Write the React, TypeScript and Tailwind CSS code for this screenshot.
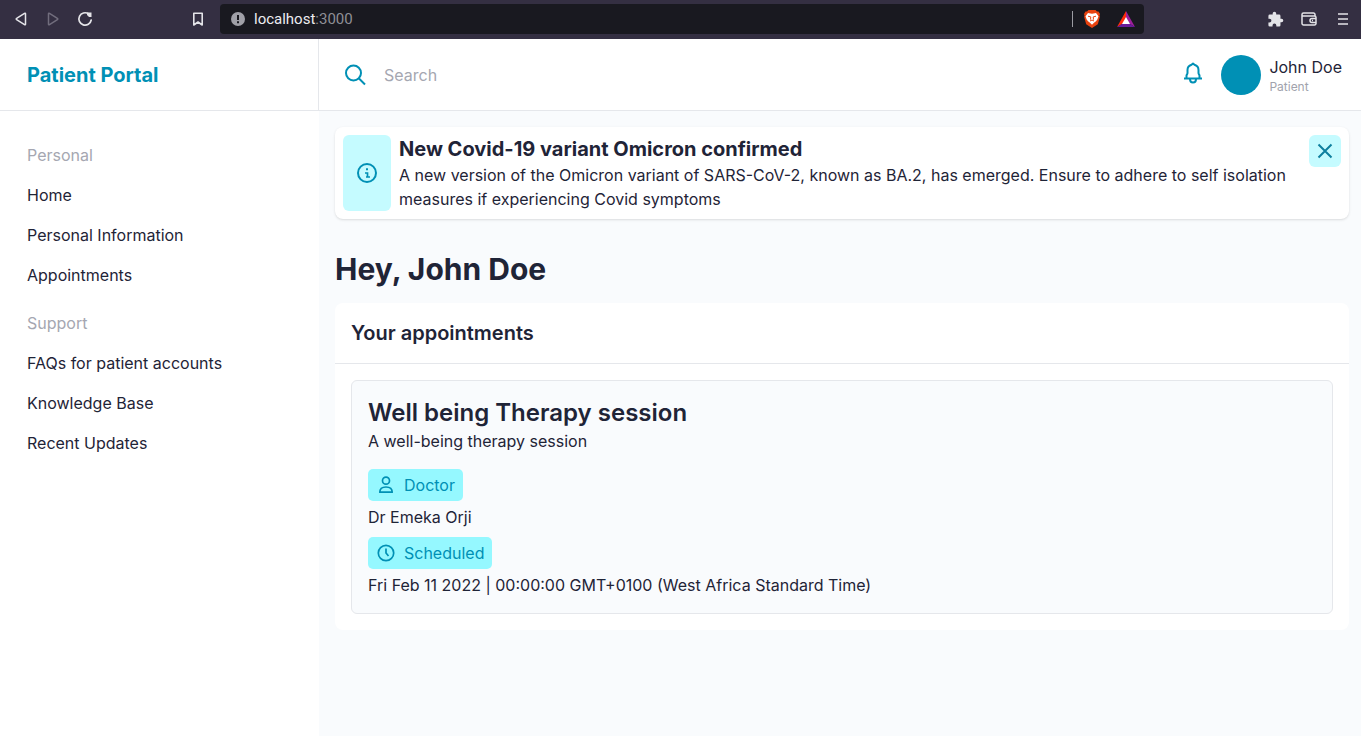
import type { ReactNode } from 'react';

const personalLinks = ['Home', 'Personal Information', 'Appointments'];
const supportLinks = ['FAQs for patient accounts', 'Knowledge Base', 'Recent Updates'];

const SearchIcon = () => (
  <svg viewBox="0 0 24 24" className="size-6" fill="none" stroke="currentColor" strokeWidth="2" aria-hidden="true">
    <circle cx="9.500" cy="10" r="7.500" />
    <path d="M15 15.500l6 6" />
  </svg>
);

const BellIcon = () => (
  <svg viewBox="0 0 24 24" className="size-6" fill="none" stroke="currentColor" strokeWidth="2" aria-hidden="true">
    <path d="M3 17.500h18" />
    <path d="M5.500 17v-2.500c0-.8 1-1.200 1-2.500V9c0-3 1.800-4.500 4-5.200L12 2.500l1.500 1.300c2.200.7 4 2.200 4 5.200v3c0 1.300 1 1.700 1 2.500V17" strokeLinejoin="round" />
    <path d="M9 18c0 2.300 1.200 3.500 3 3.500s3-1.200 3-3.500" />
  </svg>
);

const CloseIcon = () => (
  <svg viewBox="0 0 24 24" className="size-6" fill="none" stroke="currentColor" strokeWidth="2" aria-hidden="true">
    <path d="M5.500 5.500l13 13M18.500 5.500l-13 13" />
  </svg>
);

const InfoIcon = () => (
  <svg viewBox="0 0 24 24" className="size-6" fill="none" stroke="currentColor" strokeWidth="2" aria-hidden="true">
    <circle cx="12" cy="12" r="9" />
    <path d="M10 12h2.500v4.500M11 16h4" strokeWidth="1.700" />
    <path d="M11 8.200h2" />
  </svg>
);

const DoctorIcon = () => (
  <svg viewBox="0 0 20 20" className="size-5" fill="none" stroke="currentColor" strokeWidth="1.700" aria-hidden="true">
    <circle cx="10" cy="5.700" r="3.500" />
    <path d="M3.800 17.200c0-3.400 2.700-5.200 6.200-5.200s6.200 1.800 6.200 5.200z" strokeLinejoin="round" />
  </svg>
);

const ClockIcon = () => (
  <svg viewBox="0 0 20 20" className="size-5" fill="none" stroke="currentColor" strokeWidth="1.700" aria-hidden="true">
    <circle cx="10" cy="10" r="7.700" />
    <path d="M10 5.500V10l2.500 3" />
  </svg>
);

const BraveIcon = () => (
  <svg viewBox="0 0 16 18" className="h-[18px] w-4" aria-hidden="true">
    <path d="M4.500 0h7L13 1.600l1.500-.2L16 4l-.5 1.500.4 1.300-2.100 7.400L8 18l-5.800-3.800L.1 6.800l.4-1.300L0 4l1.500-2.600 1.500.2z" fill="#e8420f" />
    <path d="M4 3l4 .8L12 3l2.500 3.200-1.200 3.300L12 11.300l-2 1.500L8 14.700l-2-1.900-2-1.500-1.300-1.800L1.500 6.200z" fill="#fff" />
    <path d="M4 6.200l2.800.7-.3 2.700M12 6.200l-2.800.7.3 2.700M6 11l2-1 2 1" fill="none" stroke="#e8420f" />
  </svg>
);

const BatIcon = () => (
  <svg viewBox="0 0 18 16" className="h-4 w-[18px]" aria-hidden="true">
    <path d="M9 0L0 16l9-5.500z" fill="#ff2b0a" />
    <path d="M9 0l9 16-9-5.500z" fill="#9e1f9b" />
    <path d="M0 16h18l-9-5.500z" fill="#6a1b9a" />
    <path d="M9 6l4 7H5z" fill="#fff" />
  </svg>
);

interface BrowserButtonProps {
  label: string;
  children: ReactNode;
}

const BrowserButton = ({ label, children }: BrowserButtonProps) => (
  <button type="button" aria-label={label} className="flex size-4 items-center justify-center">
    {children}
  </button>
);

const BrowserBar = () => (
  <div className="flex h-[39px] shrink-0 items-center bg-[#342f42] pb-px text-[#e4e4e8]">
    <div className="flex w-[220px] shrink-0 items-center justify-between pr-[14px] pl-[13px]">
      <div className="flex gap-4">
        <BrowserButton label="Back">
          <svg viewBox="0 0 16 16" className="size-4" fill="none" stroke="currentColor" strokeWidth="1.500" strokeLinejoin="round">
            <path d="M12.500 2.800v10.400c0 .6-.5.8-1 .5L3.600 8.600c-.5-.3-.5-.9 0-1.200l7.900-5.100c.5-.3 1-.1 1 .5z" />
          </svg>
        </BrowserButton>
        <BrowserButton label="Forward">
          <svg viewBox="0 0 16 16" className="size-4" fill="none" stroke="#716d7d" strokeWidth="1.500" strokeLinejoin="round">
            <path d="M3.500 2.800v10.400c0 .6.5.8 1 .5l7.900-5.100c.5-.3.5-.9 0-1.200L4.500 2.300c-.5-.3-1-.1-1 .5z" />
          </svg>
        </BrowserButton>
        <BrowserButton label="Reload">
          <svg viewBox="0 0 16 16" className="size-4" fill="none" stroke="currentColor" strokeWidth="1.700">
            <path d="M11.500 2.800A6.200 6.200 0 1 0 14.200 9" strokeLinecap="round" />
            <path d="M10 1.500h4.500V6H12l-2-2z" fill="currentColor" stroke="none" />
          </svg>
        </BrowserButton>
      </div>
      <BrowserButton label="Bookmark">
        <svg viewBox="0 0 16 16" className="size-4" fill="none" stroke="currentColor" strokeWidth="1.600">
          <path d="M3.800 2.300h8.400v11.700L8 11l-4.200 3z" strokeLinejoin="round" />
        </svg>
      </BrowserButton>
    </div>
    <div className="flex h-[30px] w-[924px] min-w-0 items-center rounded bg-[#191920] pr-[9px] pl-[11px]">
      <svg viewBox="0 0 14 14" className="size-[14px] shrink-0" aria-hidden="true">
        <circle cx="7" cy="7" r="7" fill="#a0a0a8" />
        <path d="M6 3h2v5H6zM6 9.300h2v2H6z" fill="#191920" />
      </svg>
      <p className="ml-[9px] flex-1 text-[15px] font-[Roboto,sans-serif] text-[#8f8f96]">
        <span className="text-[#ececf0]">localhost</span>:3000
      </p>
      <div className="mr-[11px] h-4 w-px bg-[#9b9ba2]" />
      <div className="flex items-center gap-[17px]">
        <BraveIcon />
        <BatIcon />
      </div>
    </div>
    <div className="ml-auto flex shrink-0 items-center gap-[18px] pr-[10px]">
      <BrowserButton label="Extensions">
        <svg viewBox="0 0 24 24" className="size-[17px] shrink-0" fill="currentColor">
          <path d="M20.500 11H19V7a2 2 0 0 0-2-2h-4V3.500a2.500 2.500 0 0 0-5 0V5H4a2 2 0 0 0-2 2v3.800h1.500a2.700 2.700 0 0 1 0 5.400H2V20a2 2 0 0 0 2 2h3.800v-1.500a2.700 2.700 0 0 1 5.400 0V22H17a2 2 0 0 0 2-2v-4h1.500a2.500 2.500 0 0 0 0-5z" />
        </svg>
      </BrowserButton>
      <BrowserButton label="Wallet">
        <svg viewBox="0 0 16 16" className="size-4 shrink-0" fill="none" stroke="currentColor" strokeWidth="1.500">
          <path d="M14 5V3.500a1.500 1.500 0 0 0-1.500-1.500h-10A1.500 1.500 0 0 0 1 3.500v9A1.500 1.500 0 0 0 2.500 14h11a1.500 1.500 0 0 0 1.500-1.500v-6A1.500 1.500 0 0 0 13.500 5H1" />
          <path d="M15 7.500h-4a2 2 0 0 0 0 4h4M11 9.500h1" />
        </svg>
      </BrowserButton>
      <BrowserButton label="Menu">
        <svg viewBox="0 0 16 16" className="size-4 shrink-0" stroke="currentColor" strokeWidth="1.700">
          <path d="M3 3h10M3 8h10M3 13h10" />
        </svg>
      </BrowserButton>
    </div>
  </div>
);

const Header = () => (
  <header className="flex h-18 shrink-0 border-b border-[#e5e7eb]">
    <div className="flex w-[319px] shrink-0 items-center border-r border-[#e5e7eb] pl-[27px]">
      <a href="#home" className="text-xl font-bold text-[#0090b5]">Patient Portal</a>
    </div>
    <div className="flex min-w-0 flex-1 items-center pr-[19px] pl-[25px]">
      <label htmlFor="search" aria-label="Search" className="text-[#0090b5]">
        <SearchIcon />
      </label>
      <input
        id="search"
        type="search"
        placeholder="Search"
        className="ml-4 min-w-0 flex-1 bg-transparent outline-none placeholder:text-[#a5a7b1]"
      />
      <button type="button" aria-label="Notifications" className="mr-4 mb-1 text-[#0090b5]">
        <BellIcon />
      </button>
      <div className="size-10 rounded-full bg-[#0090b5]" />
      <div className="ml-2">
        <p>John Doe</p>
        <p className="text-xs text-[#a1a3ad]">Patient</p>
      </div>
    </div>
  </header>
);

interface NavGroupProps {
  title: string;
  links: string[];
}

const NavGroup = ({ title, links }: NavGroupProps) => (
  <div>
    <h2 className="py-2 text-[#a5a7b1]">{title}</h2>
    <ul>
      {links.map((link) => (
        <li key={link}>
          <a href="#" className="block py-2">{link}</a>
        </li>
      ))}
    </ul>
  </div>
);

const Alert = () => (
  <section className="flex rounded-lg bg-white p-2 shadow-sm">
    <div className="flex w-12 shrink-0 items-center justify-center rounded-md bg-[#c5fbff] text-[#0090b5]">
      <InfoIcon />
    </div>
    <div className="min-w-0 flex-1 px-2">
      <h2 className="text-xl font-bold">New Covid-19 variant Omicron confirmed</h2>
      <p>
        A new version of the Omicron variant of SARS-CoV-2, known as BA.2, has emerged. Ensure to adhere to
        self isolation measures if experiencing Covid symptoms
      </p>
    </div>
    <button
      type="button"
      aria-label="Dismiss"
      className="flex size-8 shrink-0 items-center justify-center rounded-md bg-[#c5fbff] text-[#0e7f9f]"
    >
      <CloseIcon />
    </button>
  </section>
);

interface BadgeProps {
  icon: ReactNode;
  label: string;
}

const Badge = ({ icon, label }: BadgeProps) => (
  <div className="flex h-8 w-fit items-center gap-2 rounded-[5px] bg-[#95f8ff] px-2 text-[#0090b5]">
    {icon}
    <span>{label}</span>
  </div>
);

const Appointments = () => (
  <section className="rounded-lg bg-white">
    <h2 className="border-b border-[#e5e7eb] px-4 py-4 text-xl font-semibold">Your appointments</h2>
    <div className="p-4">
      <article className="rounded-md border border-[#e5e7eb] bg-[#f9fbfd] p-4">
        <h3 className="text-2xl font-semibold">Well being Therapy session</h3>
        <p>A well-being therapy session</p>
        <div className="mt-4 flex flex-col gap-1">
          <Badge icon={<DoctorIcon />} label="Doctor" />
          <p>Dr Emeka Orji</p>
        </div>
        <div className="mt-2 flex flex-col gap-1">
          <Badge icon={<ClockIcon />} label="Scheduled" />
          <p>Fri Feb 11 2022 | 00:00:00 GMT+0100 (West Africa Standard Time)</p>
        </div>
      </article>
    </div>
  </section>
);

const App = () => {
  return (
    <div className="flex min-h-screen flex-col bg-white text-base font-[Inter,sans-serif] text-[#1f2437] antialiased">
      <BrowserBar />
      <Header />
      <div className="flex flex-1">
        <nav className="flex w-[319px] shrink-0 flex-col gap-2 pt-6 pl-[27px]">
          <NavGroup title="Personal" links={personalLinks} />
          <NavGroup title="Support" links={supportLinks} />
        </nav>
        <main className="min-w-0 flex-1 bg-[#f9fbfd] pt-4 pr-3 pb-4 pl-4">
          <Alert />
          <h1 className="mt-8 mb-4 text-3xl font-bold">Hey, John Doe</h1>
          <Appointments />
        </main>
      </div>
    </div>
  );
};

export default App;
